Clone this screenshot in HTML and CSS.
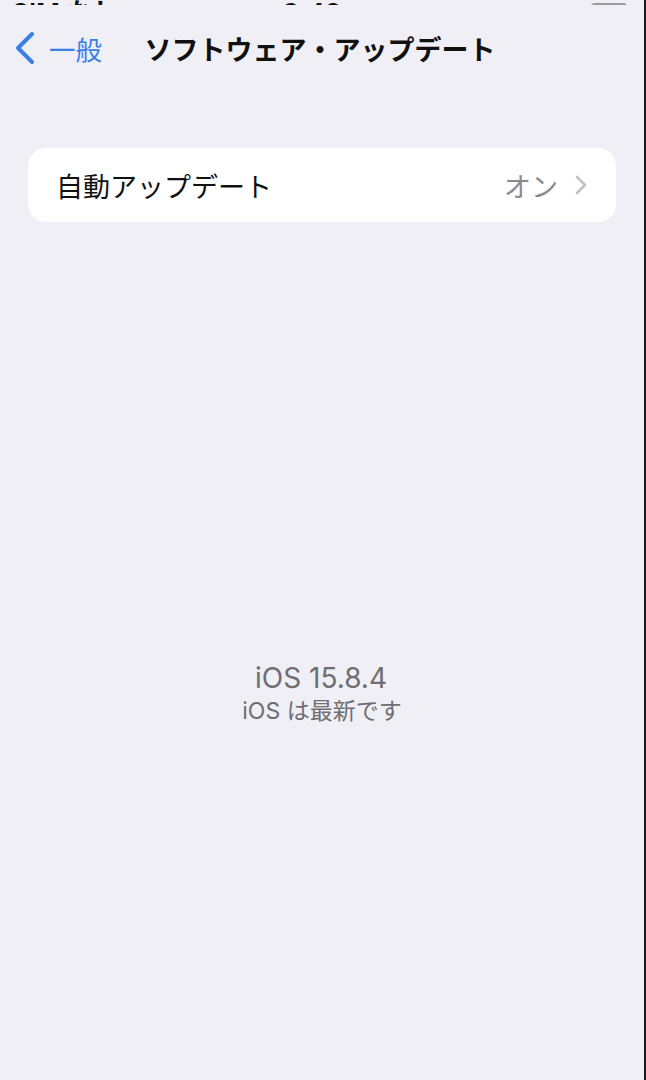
FILE: index.html
```html
<!DOCTYPE html>
<html>
<head>
    <link rel="stylesheet" href="styles.css">
</head>
<body>
    <div class="screen">
        <div class="status-bar">
            <div class="status-left">
                <span class="carrier">SIM なし</span>
                <svg class="wifi" width="20" height="16" viewBox="0 0 20 16">
                    <path d="M10 15 L4 8 A9 9 0 0 1 16 8 Z" fill="#111"/>
                </svg>
            </div>
            <span class="clock">9:42</span>
            <div class="status-right">
                <span class="battery"></span>
            </div>
        </div>

        <div class="nav-bar">
            <a class="back">
                <svg width="24" height="34" viewBox="0 0 24 34">
                    <path d="M19 3 L5 17 L19 31" fill="none" stroke="#3a7ee8" stroke-width="4" stroke-linecap="round" stroke-linejoin="round"/>
                </svg>
                <span>一般</span>
            </a>
            <h1 class="title">ソフトウェア・アップデート</h1>
            <div></div>
        </div>

        <div class="group">
            <div class="row">
                <span class="row-label">自動アップデート</span>
                <span class="row-value">オン</span>
                <svg class="chevron" width="14" height="22" viewBox="0 0 14 22">
                    <path d="M3 3 L11 11 L3 19" fill="none" stroke="#c2c2c6" stroke-width="2.6" stroke-linecap="round" stroke-linejoin="round"/>
                </svg>
            </div>
        </div>

        <div class="version">
            <p class="version-number">iOS 15.8.4</p>
            <p class="version-status">iOS は最新です</p>
        </div>
    </div>
</body>
</html>
```

FILE: styles.css
```css
body {
    margin: 0;
    background-color: #efeff5;
    font-family: Inter, "Noto Sans CJK JP", sans-serif;
    overflow: hidden;
}
.screen {
    width: 644px;
    height: 1080px;
    border-right: 2px solid #1a1a1a;
    display: flex;
    flex-direction: column;
    overflow: hidden;
}
.status-bar {
    height: 5px;
    display: grid;
    grid-template-columns: 1fr auto 1fr;
    align-items: end;
    overflow: hidden;
    padding: 0 14px 0 12px;
    font-size: 26px;
    font-weight: 600;
    color: #111;
}
.status-left {
    display: flex;
    align-items: flex-end;
    gap: 14px;
    line-height: 1;
    margin-bottom: 0;
}
.status-left .wifi {
    margin-bottom: 2px;
}
.clock {
    line-height: 1;
    margin-bottom: 0;
    padding-right: 18px;
}
.status-right {
    display: flex;
    justify-content: flex-end;
}
.battery {
    width: 34px;
    height: 18px;
    border: 2px solid #9a9a9e;
    border-radius: 5px;
    margin-bottom: 1px;
    margin-right: 2px;
}
.nav-bar {
    display: grid;
    grid-template-columns: 1fr auto 1fr;
    align-items: center;
    height: 44px;
    margin-top: 21px;
}
.back {
    display: flex;
    align-items: center;
    gap: 12px;
    padding-left: 13px;
    color: #3a7ee8;
    font-size: 26.5px;
}
.title {
    margin: 0;
    font-size: 27px;
    font-weight: 700;
    color: #111;
    padding-right: 4px;
}
.group {
    margin: 78px 28px 0 28px;
    background-color: #ffffff;
    border-radius: 18px;
}
.row {
    display: flex;
    align-items: center;
    height: 74px;
    padding: 0 28px 0 28px;
    font-size: 27px;
}
.row-label {
    flex: 1;
    color: #111;
}
.row-value {
    color: #8a8a8e;
    margin-right: 16px;
}
.version {
    margin-top: 438px;
    text-align: center;
    color: #6e6e73;
}
.version p {
    margin: 0;
}
.version-number {
    font-size: 28px;
    line-height: 36px;
    padding-right: 2px;
}
.version-status {
    font-size: 23px;
    line-height: 30px;
}
```
